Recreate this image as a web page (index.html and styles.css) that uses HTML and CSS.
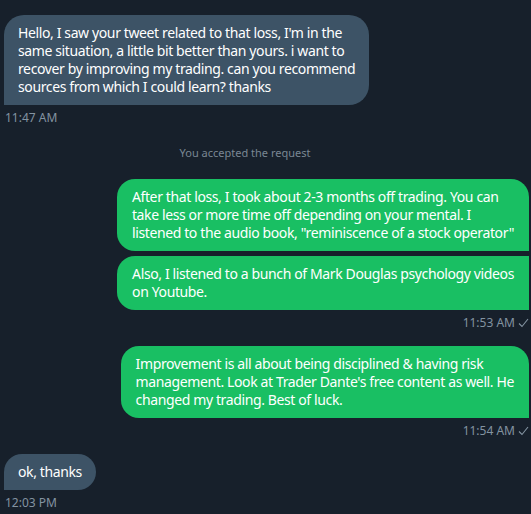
FILE: index.html
```html
<!DOCTYPE html>
<html>
<head>
<meta charset="utf-8">
<link rel="stylesheet" href="styles.css">
</head>
<body>
<div class="chat">
  <div class="msg in first">
    <div class="bubble in-bubble">Hello, I saw your tweet related to that loss, I'm in the<br>same situation, a little bit better than yours. i want to<br>recover by improving my trading. can you recommend<br>sources from which I could learn? thanks</div>
    <div class="time">11:47 AM</div>
  </div>

  <div class="notice">You accepted the request</div>

  <div class="msg out">
    <div class="bubble out-bubble top">After that loss, I took about 2-3 months off trading. You can<br>take less or more time off depending on your mental. I<br>listened to the audio book, "reminiscence of a stock operator"</div>
    <div class="bubble out-bubble mid">Also, I listened to a bunch of Mark Douglas psychology videos<br>on Youtube.</div>
    <div class="time">11:53 AM <svg class="check" width="11" height="10" viewBox="0 0 11 10"><path d="M1 5.5 L4 8.5 L10 1" fill="none" stroke="currentColor" stroke-width="1.1"/></svg></div>
  </div>

  <div class="msg out">
    <div class="bubble out-bubble top">Improvement is all about being disciplined &amp; having risk<br>management. Look at Trader Dante's free content as well. He<br>changed my trading. Best of luck.</div>
    <div class="time">11:54 AM <svg class="check" width="11" height="10" viewBox="0 0 11 10"><path d="M1 5.5 L4 8.5 L10 1" fill="none" stroke="currentColor" stroke-width="1.1"/></svg></div>
  </div>

  <div class="msg in">
    <div class="bubble in-bubble">ok, thanks</div>
    <div class="time">12:03 PM</div>
  </div>
</div>
</body>
</html>
```

FILE: styles.css
```css
html, body {
  margin: 0;
  padding: 0;
  background: #17202b;
}
body {
  font-family: "Noto Sans", "Open Sans", sans-serif;
  color: #ffffff;
  width: 531px;
  height: 514px;
  overflow: hidden;
}
.chat {
  display: flex;
  flex-direction: column;
  padding: 15px 2px 0 4px;
}
.msg {
  display: flex;
  flex-direction: column;
  gap: 5px;
}
.msg.in { align-items: flex-start; }
.msg.out { align-items: flex-end; }
.bubble {
  font-size: 14px;
  line-height: 18px;
  padding: 9px 14px;
  letter-spacing: -0.38px;
}
.in-bubble {
  background: #3d5366;
  border-radius: 20px 20px 20px 0;
}
.out-bubble {
  background: #19bf63;
  padding: 9px 15px;
}
.out-bubble.top { border-radius: 18px 18px 0 18px; }
.out-bubble.mid { border-radius: 18px 0 0 18px; }
.time {
  font-size: 12px;
  line-height: 15px;
  color: #8393a1;
  display: flex;
  align-items: center;
  gap: 3px;
}
.in .time { padding-left: 1px; }
.check { color: #8393a1; }
.notice {
  text-align: center;
  font-size: 11px;
  line-height: 14px;
  color: #7a8793;
  margin: 21px 0 19px;
  padding-right: 43px;
}
.msg.out + .msg.out { margin-top: 16px; }
.msg.out + .msg.in { margin-top: 16px; }
```
